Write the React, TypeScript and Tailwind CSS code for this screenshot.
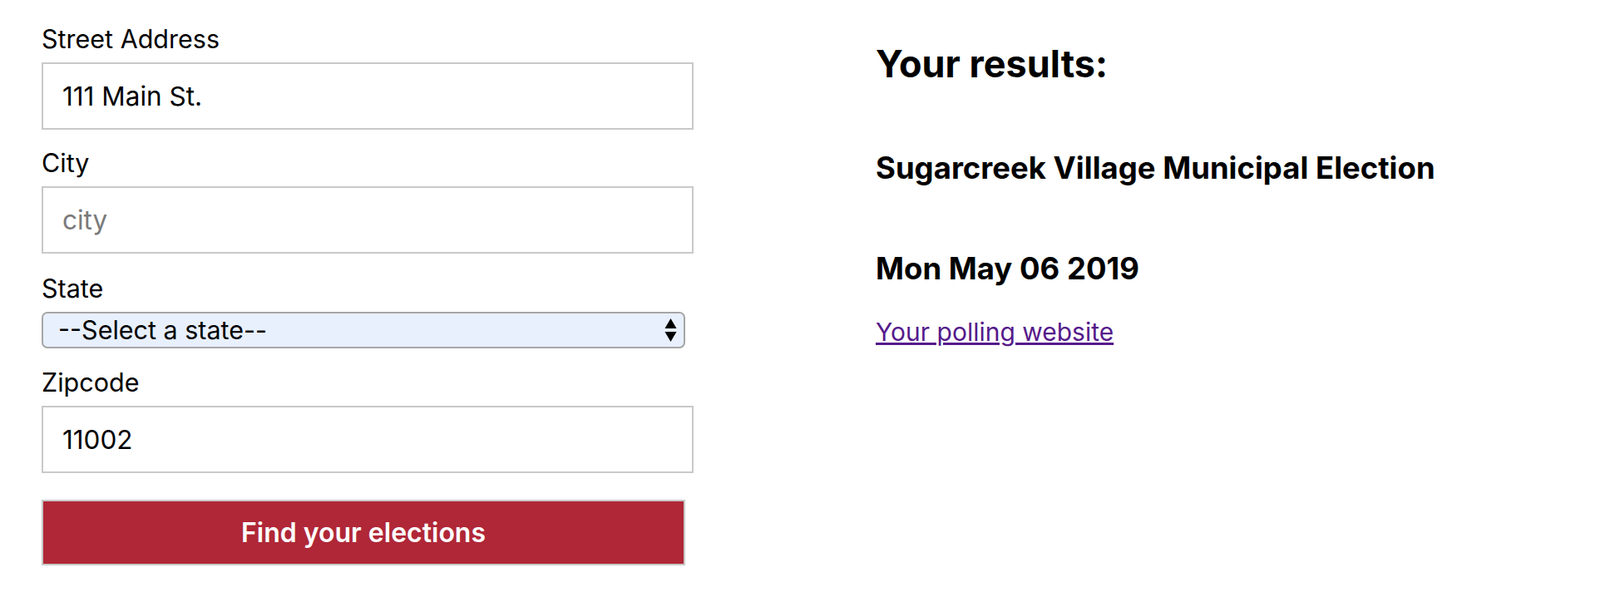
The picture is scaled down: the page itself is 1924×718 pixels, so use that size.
import React from 'react';

const Field = ({ label, children, className = '' }: { label: string; children: React.ReactNode; className?: string }) => (
  <div className={className}>
    <label className="block h-[36px] leading-[36px] text-[30.5px] text-black mb-[10px]">{label}</label>
    {children}
  </div>
);

const inputCls =
  'block w-full h-[81px] border-2 border-[#c9c9c9] bg-white px-[23px] text-[31.5px] text-black placeholder:text-[#7a7a7a] outline-none';

export default function App() {
  return (
    <div className="min-h-screen bg-white flex font-['Inter',sans-serif]">
      {/* Address form */}
      <form className="ml-[50px] w-[784px] pt-[29px]" onSubmit={(e) => e.preventDefault()}>
        <Field label="Street Address">
          <input className={inputCls} defaultValue="111 Main St." />
        </Field>
        <Field label="City" className="mt-[22px]">
          <input className={inputCls} placeholder="city" />
        </Field>
        <Field label="State" className="mt-[24px]">
          <div className="relative w-[774px] h-[44px] rounded-[7px] border-2 border-[#a6a6a6] bg-[#e8f0fe] flex items-center pl-[18px] text-[30.5px] text-black">
            <span>--Select a state--</span>
            <svg className="absolute right-[8px] top-1/2 -translate-y-1/2" width="15" height="30" viewBox="0 0 15 30">
              <path d="M7.5 1 L14.5 13 L0.5 13 Z" fill="#000" />
              <path d="M0.5 17 L14.5 17 L7.5 29 Z" fill="#000" />
            </svg>
          </div>
        </Field>
        <Field label="Zipcode" className="mt-[23px]">
          <input className={inputCls} defaultValue="11002" />
        </Field>
        <button
          type="submit"
          className="mt-[32px] block w-[774px] h-[79px] bg-[#b02737] border-2 border-[#c8c8c8] text-white text-[32px] font-semibold"
        >
          Find your elections
        </button>
      </form>

      {/* Results */}
      <div className="ml-[219px] pt-[50px] text-black">
        <h2 className="text-[45px] leading-[54px] font-bold">Your results:</h2>
        <h3 className="mt-[78px] text-[36.5px] leading-[40px] font-bold">Sugarcreek Village Municipal Election</h3>
        <h3 className="mt-[81px] text-[36.5px] leading-[40px] font-bold">Mon May 06 2019</h3>
        <a href="#" className="mt-[40px] block text-[30px] leading-[32px] text-[#551a8b] underline">
          Your polling website
        </a>
      </div>
    </div>
  );
}
